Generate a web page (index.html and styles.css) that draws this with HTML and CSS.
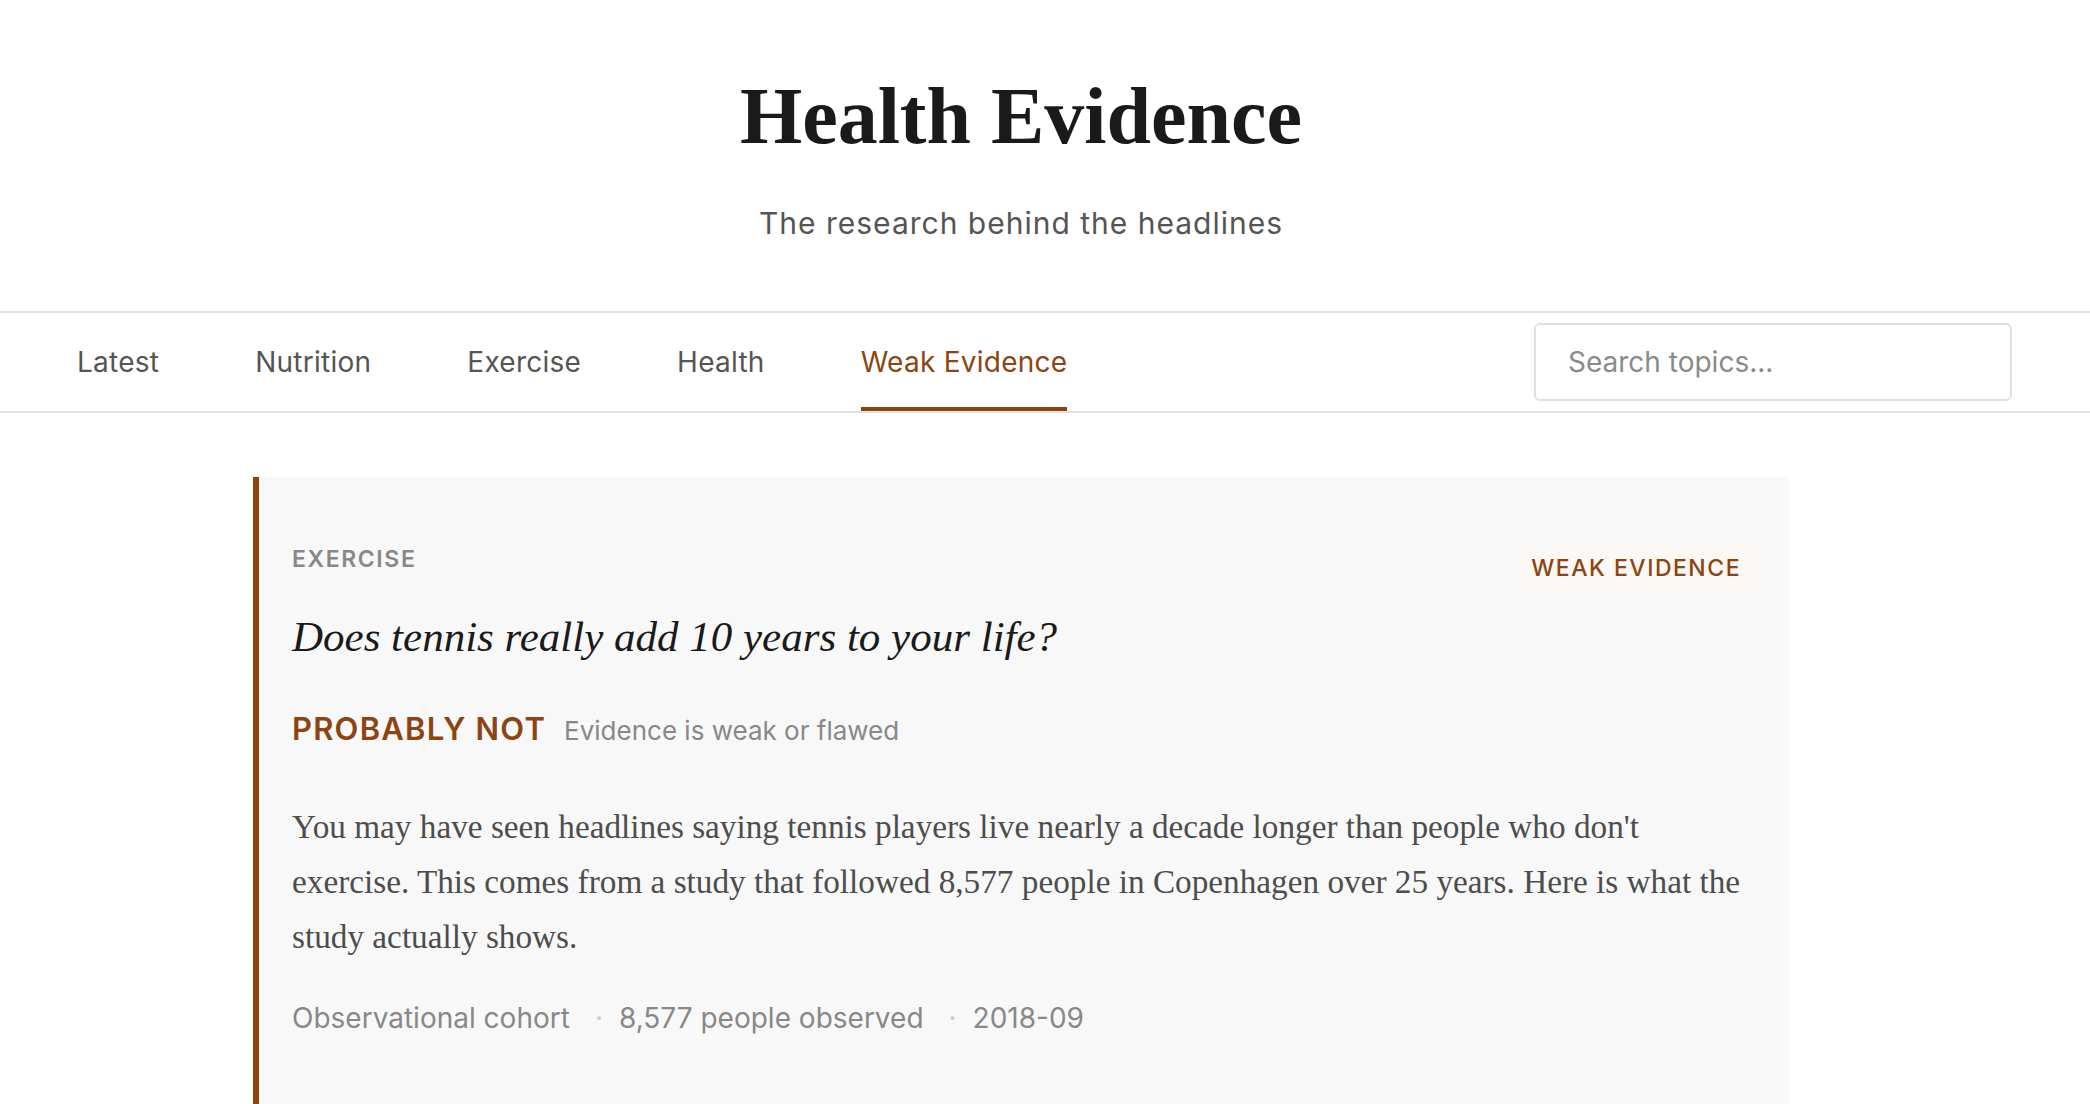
FILE: index.html
```html
<!DOCTYPE html>
<html lang="en">
<head>
<meta charset="utf-8">
<title>Health Evidence</title>
<link rel="stylesheet" href="styles.css">
</head>
<body>
<header class="site-header">
  <div class="header-inner">
    <h1 class="site-title">Health Evidence</h1>
    <p class="site-tagline">The research behind the headlines</p>
  </div>
</header>
<nav class="site-nav">
  <ul class="nav-links">
    <li><a class="nav-link" href="#">Latest</a></li>
    <li><a class="nav-link" href="#">Nutrition</a></li>
    <li><a class="nav-link" href="#">Exercise</a></li>
    <li><a class="nav-link" href="#">Health</a></li>
    <li><a class="nav-link is-active" href="#">Weak Evidence</a></li>
  </ul>
  <input class="search" type="text" placeholder="Search topics...">
</nav>
<main class="content">
  <article class="card">
    <div class="card-top">
      <span class="card-category">Exercise</span>
      <span class="badge">Weak Evidence</span>
    </div>
    <h2 class="card-title">Does tennis really add 10 years to your life?</h2>
    <div class="verdict">
      <span class="verdict-label">PROBABLY NOT</span>
      <span class="verdict-note">Evidence is weak or flawed</span>
    </div>
    <p class="card-summary">You may have seen headlines saying tennis players live nearly a decade longer than people who don't exercise. This comes from a study that followed 8,577 people in Copenhagen over 25 years. Here is what the study actually shows.</p>
    <div class="meta">
      <span>Observational cohort</span>
      <span class="meta-dot">·</span>
      <span>8,577 people observed</span>
      <span class="meta-dot">·</span>
      <span>2018-09</span>
    </div>
  </article>
</main>
</body>
</html>
```

FILE: styles.css
```css
* { box-sizing: border-box; }
html, body { margin: 0; padding: 0; background: #ffffff; }
body {
  font-family: Inter, "Noto Sans", "Liberation Sans", sans-serif;
  color: #1a1a1a;
  height: 1104px;
  overflow: hidden;
}

.site-header {
  padding: 68px 0 68px;
  border-bottom: 2px solid #e3e3e3;
}
.header-inner {
  width: 1536px;
  margin-left: 253px;
  text-align: center;
}
.site-title {
  margin: 0;
  font-family: "Liberation Serif", "Times New Roman", serif;
  font-weight: 700;
  font-size: 80px;
  line-height: 96px;
  color: #1a1a1a;
}
.site-tagline {
  margin: 39px 0 0;
  font-size: 30px;
  line-height: 40px;
  letter-spacing: 1px;
  color: #555555;
}

.site-nav {
  display: flex;
  align-items: center;
  justify-content: space-between;
  height: 100px;
  padding: 0 78px 0 77px;
  border-bottom: 2px solid #e3e3e3;
}
.nav-links {
  display: flex;
  align-self: stretch;
  gap: 96px;
  margin: 0;
  padding: 0;
  list-style: none;
}
.nav-links li { display: flex; }
.nav-link {
  display: flex;
  align-items: center;
  padding-top: 4px;
  border-bottom: 4px solid transparent;
  font-size: 28px;
  letter-spacing: 0.25px;
  color: #555555;
  text-decoration: none;
}
.nav-link.is-active {
  color: #8b4513;
  border-bottom-color: #8b4513;
}
.search {
  width: 478px;
  height: 78px;
  padding: 0 32px;
  border: 2px solid #e0e0e0;
  border-radius: 6px;
  font-family: Inter, "Noto Sans", sans-serif;
  font-size: 28px;
  color: #333;
  background: #fff;
  outline: none;
}
.search::placeholder { color: #8a8a8a; }

.content {
  margin: 64px 0 0 253px;
  width: 1536px;
}
.card {
  background: #f8f8f8;
  border-left: 6px solid #8b4513;
  padding: 65px 32px 80px 33px;
}
.card-top {
  display: flex;
  justify-content: space-between;
  align-items: flex-start;
}
.card-category {
  font-size: 23px;
  line-height: 34px;
  font-weight: 600;
  letter-spacing: 1.6px;
  text-transform: uppercase;
  color: #888888;
}
.badge {
  background: #fcf8f5;
  color: #8b4513;
  font-size: 23px;
  line-height: 53px;
  font-weight: 500;
  letter-spacing: 1.5px;
  text-transform: uppercase;
  padding: 0 16px 0 16px;
}
.card-title {
  margin: 14px 0 0;
  font-family: "Liberation Serif", "Times New Roman", serif;
  font-style: italic;
  font-weight: 400;
  font-size: 43px;
  line-height: 56px;
  color: #1a1a1a;
}
.verdict {
  display: flex;
  align-items: baseline;
  gap: 18px;
  margin-top: 45px;
}
.verdict-label {
  font-size: 31px;
  font-weight: 600;
  letter-spacing: 1.2px;
  color: #8b4513;
}
.verdict-note {
  font-size: 26px;
  color: #888888;
}
.card-summary {
  max-width: 1462px;
  margin: 52px 0 0;
  font-family: "Liberation Serif", "Times New Roman", serif;
  font-size: 33.25px;
  line-height: 55px;
  color: #4d4d4d;
}
.meta {
  display: flex;
  align-items: baseline;
  margin-top: 37px;
  font-size: 28px;
  color: #888888;
}
.meta-dot {
  margin: 0 16px 0 25px;
  color: #cccccc;
}
```
